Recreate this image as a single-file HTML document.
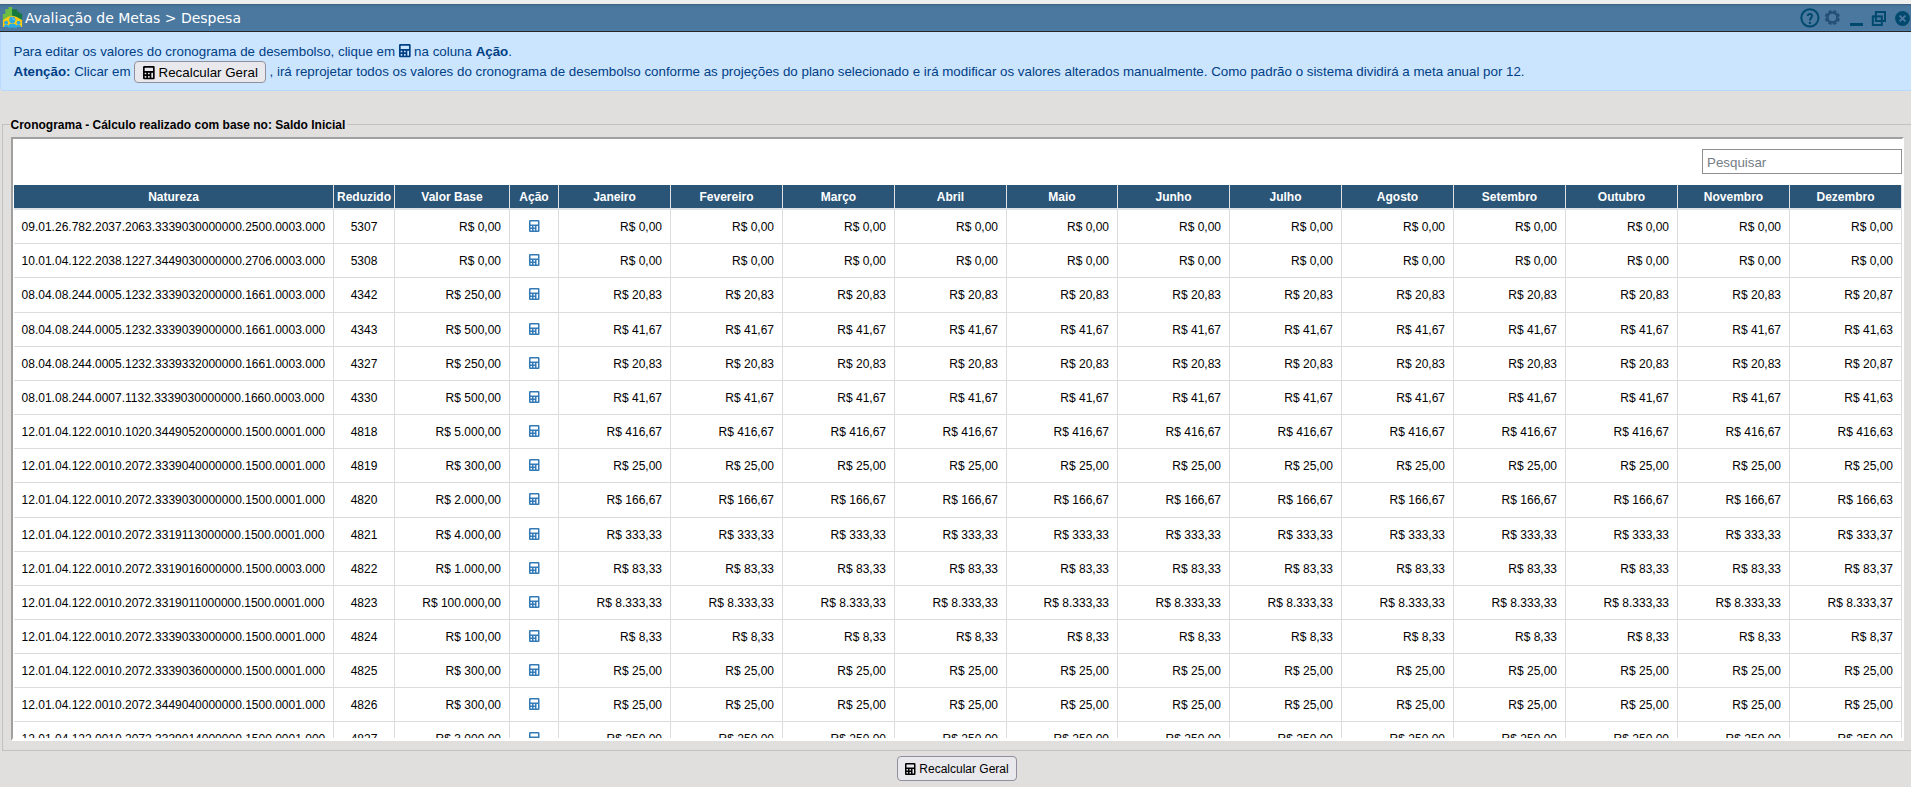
<!DOCTYPE html>
<html lang="pt-BR"><head><meta charset="utf-8"><title>Avaliação de Metas &gt; Despesa</title>
<style>
*{box-sizing:border-box}
html,body{margin:0;padding:0}
html{width:1911px;height:787px;overflow:hidden}
body{width:1911px;height:787px;overflow:hidden;position:relative;background:#e1dfde;font-family:"Liberation Sans",Arial,sans-serif;font-size:12px;color:#000}
#topstrip{position:absolute;left:0;top:0;width:1911px;height:4px;background:#eeeeee}
#titlebar{position:absolute;left:0;top:4px;width:1911px;height:28px;background:linear-gradient(#456f94 0,#4a789f 2px,#4a789f 24px,#4d7eaa 26px);border-top:1px solid #3d6487;border-bottom:1px solid #262626;}
#titlebar .ttl{position:absolute;left:25px;top:4px;font-family:"DejaVu Sans","Liberation Sans",sans-serif;font-size:14px;color:#fff;white-space:nowrap;line-height:18px}
#titlebar svg.logo{position:absolute;left:2px;top:2px}
#titlebar .ico{position:absolute}
#info{position:absolute;left:0;top:32px;width:1911px;height:59px;background:#cce5ff;border:1px solid #b8daff;border-top:none;border-right:none;border-radius:0 0 0 4px;color:#004085;font-size:13.333px;padding:0}
#info .l1{position:absolute;left:12.5px;top:12px;white-space:nowrap;line-height:16px}
#info .l2{position:absolute;left:12.5px;top:28px;white-space:nowrap;line-height:22px}
.btn{display:inline-block;background:#e9e9ed;border:1px solid #8f8f9d;border-radius:4px;color:#000;font-family:"Liberation Sans",Arial,sans-serif;font-size:13.333px;white-space:nowrap}
svg.calc{fill:currentColor;vertical-align:-0.125em;height:1em;width:0.875em;overflow:visible}
#fs{position:absolute;left:2px;top:124px;width:1909px;height:627px;border:1px solid #c4c2c1;border-right:none}
#legend{position:absolute;left:9.5px;top:117px;padding:0 2px 0 1px;background:#e1dfde;font-weight:bold;font-size:12px;line-height:16px;white-space:nowrap}
#box{position:absolute;left:11px;top:137px;width:1893px;height:604px;background:#fff;border:2px solid;border-bottom-width:3px;border-color:#a0a0a0 #fff #fff #a0a0a0;overflow:hidden}
#search{position:absolute;left:1689px;top:10px;width:200px;height:25px;border:1px solid #8f8f93;background:#fff;font-size:13.333px;color:#747c86;padding:5px 0 0 4px;line-height:15px}
table.grid{position:absolute;left:1px;top:46px;border-collapse:collapse;table-layout:fixed;width:1887px;font-size:12px}
table.grid th{background:#2b5577;color:#fff;font-weight:bold;height:24px;padding:0;border:1px solid #dee2e6;border-top:none;border-bottom:2px solid #dee2e6;text-align:center;font-size:12px}
table.grid td{height:34px;padding:2px 8px 0 8px;border:1px solid #dcdcdc;white-space:nowrap;overflow:hidden}
table.grid td.l{text-align:left;padding-left:6.6px}
table.grid td.r{text-align:right}
table.grid td.c{text-align:center;padding:2px 0 0 0}
table.grid tr.t td{height:35px;padding-top:1px}
table.grid th:first-child{border-left-color:#2b5577;padding-right:1px}
table.grid td:first-child{border-left-color:#fff}
a.act{color:#337ab7}
a.act svg{position:relative;top:-0.7px}
#btnbottom{position:absolute;left:897px;top:756px;width:120px;height:25px;padding:5px 0 0 7.5px;line-height:14px;font-size:12px}

#btnbottom svg{margin-left:-0.5px;margin-right:0.5px}

</style></head>
<body>
<div id="topstrip"></div>
<div id="titlebar">
<svg class="logo" width="22" height="22" viewBox="0 0 22 22"><polygon points="0.850,13.200 0.850,7.100 3.300,7.100 3.300,2.300 6.500,2.300 6.500,0 10.100,0 10.100,9.500" fill="#6fbe44"/><polygon points="10.100,9.500 10.100,2.200 15.100,2.200 15.100,4.650 17.400,4.650 17.400,6.400 20.100,6.400 20.100,13.200" fill="#167a3d"/><polygon points="0.850,13 6.300,9.800 10.300,8.800 14.300,9.800 20.100,13 20.100,19.950 0.850,19.950" fill="#fdc911"/><g fill="#29abe2"><circle cx="10.300" cy="12.900" r="3.100"/><path d="M6 20.700c0-2.800 1.600-4.200 4.300-4.200s4.800 1.400 4.800 4.200Z"/><circle cx="4.200" cy="15.700" r="1.900"/><path d="M1.900 20c0-1.700 .8-2.600 2.300-2.600s2.500 .9 2.500 2.600Z"/><circle cx="16.500" cy="15.700" r="1.900"/><path d="M14 20c0-1.700 .9-2.600 2.500-2.600s2.500 .9 2.500 2.600Z"/></g><path d="M9.300 10.500c1.700 .2 3 1.400 3.400 3.200c-1.100-1.300-2.200-2.300-3.400-3.200Z" fill="#a8dcf3"/></svg>
<span class="ttl">Avaliação de Metas &gt; Despesa</span>
<svg class="ico" style="left:1800px;top:3px" width="20" height="20" viewBox="0 0 20 20"><circle cx="9.900" cy="9.850" r="8.600" fill="none" stroke="#00496e" stroke-width="2"/><path d="M7.800 8.100a2.100 2.100 0 0 1 4.200 0c0 1.900-2.100 2-2.100 4.500" fill="none" stroke="#00496e" stroke-width="1.900"/><circle cx="9.900" cy="15" r="1.150" fill="#00496e"/></svg>
<svg class="ico" style="left:1824px;top:4px" width="18" height="18" viewBox="0 0 18 18"><g transform="translate(8.400 8.500)"><g fill="#254f76" transform="rotate(22.5)"><circle r="5.900"/><rect x="-1.650" y="-7.500" width="3.300" height="15" transform="rotate(0)"/><rect x="-1.650" y="-7.500" width="3.300" height="15" transform="rotate(45)"/><rect x="-1.650" y="-7.500" width="3.300" height="15" transform="rotate(90)"/><rect x="-1.650" y="-7.500" width="3.300" height="15" transform="rotate(135)"/></g><circle r="3.750" fill="#4a789f"/></g></svg>
<div class="ico" style="left:1850px;top:18px;width:13px;height:3px;background:#00496e"></div>
<svg class="ico" style="left:1871px;top:6px" width="16" height="16" viewBox="0 0 16 16"><rect x="4.900" y="1" width="9.100" height="9" fill="none" stroke="#00496e" stroke-width="2"/><rect x="1.800" y="5.400" width="9" height="8.600" fill="none" stroke="#00496e" stroke-width="2"/></svg>
<svg class="ico" style="left:1895px;top:6px" width="15" height="15" viewBox="0 0 15 15"><circle cx="7.500" cy="7.500" r="7.400" fill="#00496e"/><path d="M4.600 4.600l5.800 5.800M10.400 4.600l-5.800 5.800" stroke="#4a789f" stroke-width="2"/></svg>
</div>
<div id="info">
<div class="l1">Para editar os valores do cronograma de desembolso, clique em <svg class="calc" viewBox="0 0 448 512"><path fill-rule="evenodd" d="M48 0H400a48 48 0 0 1 48 48V464a48 48 0 0 1 -48 48H48a48 48 0 0 1 -48 -48V48a48 48 0 0 1 48 -48ZM76.8 64H371.2a12.8 12.8 0 0 1 12.8 12.8V179.2a12.8 12.8 0 0 1 -12.8 12.8H76.8a12.8 12.8 0 0 1 -12.8 -12.8V76.8a12.8 12.8 0 0 1 12.8 -12.8ZM76.8 256H115.2a12.8 12.8 0 0 1 12.8 12.8V307.2a12.8 12.8 0 0 1 -12.8 12.8H76.8a12.8 12.8 0 0 1 -12.8 -12.8V268.8a12.8 12.8 0 0 1 12.8 -12.8ZM204.8 256H243.2a12.8 12.8 0 0 1 12.8 12.8V307.2a12.8 12.8 0 0 1 -12.8 12.8H204.8a12.8 12.8 0 0 1 -12.8 -12.8V268.8a12.8 12.8 0 0 1 12.8 -12.8ZM76.8 384H115.2a12.8 12.8 0 0 1 12.8 12.8V435.2a12.8 12.8 0 0 1 -12.8 12.8H76.8a12.8 12.8 0 0 1 -12.8 -12.8V396.8a12.8 12.8 0 0 1 12.8 -12.8ZM204.8 384H243.2a12.8 12.8 0 0 1 12.8 12.8V435.2a12.8 12.8 0 0 1 -12.8 12.8H204.8a12.8 12.8 0 0 1 -12.8 -12.8V396.8a12.8 12.8 0 0 1 12.8 -12.8ZM332.8 256H371.2a12.8 12.8 0 0 1 12.8 12.8V435.2a12.8 12.8 0 0 1 -12.8 12.8H332.8a12.8 12.8 0 0 1 -12.8 -12.8V268.8a12.8 12.8 0 0 1 12.8 -12.8Z"/></svg> na coluna <b>Ação</b>.</div>
<div class="l2"><b>Atenção:</b> Clicar em <span class="btn" style="padding:3px 7px 2px 8px;line-height:15px;position:relative;top:1.400px"><svg class="calc" viewBox="0 0 448 512"><path fill-rule="evenodd" d="M48 0H400a48 48 0 0 1 48 48V464a48 48 0 0 1 -48 48H48a48 48 0 0 1 -48 -48V48a48 48 0 0 1 48 -48ZM76.8 64H371.2a12.8 12.8 0 0 1 12.8 12.8V179.2a12.8 12.8 0 0 1 -12.8 12.8H76.8a12.8 12.8 0 0 1 -12.8 -12.8V76.8a12.8 12.8 0 0 1 12.8 -12.8ZM76.8 256H115.2a12.8 12.8 0 0 1 12.8 12.8V307.2a12.8 12.8 0 0 1 -12.8 12.8H76.8a12.8 12.8 0 0 1 -12.8 -12.8V268.8a12.8 12.8 0 0 1 12.8 -12.8ZM204.8 256H243.2a12.8 12.8 0 0 1 12.8 12.8V307.2a12.8 12.8 0 0 1 -12.8 12.8H204.8a12.8 12.8 0 0 1 -12.8 -12.8V268.8a12.8 12.8 0 0 1 12.8 -12.8ZM76.8 384H115.2a12.8 12.8 0 0 1 12.8 12.8V435.2a12.8 12.8 0 0 1 -12.8 12.8H76.8a12.8 12.8 0 0 1 -12.8 -12.8V396.8a12.8 12.8 0 0 1 12.8 -12.8ZM204.8 384H243.2a12.8 12.8 0 0 1 12.8 12.8V435.2a12.8 12.8 0 0 1 -12.8 12.8H204.8a12.8 12.8 0 0 1 -12.8 -12.8V396.8a12.8 12.8 0 0 1 12.8 -12.8ZM332.8 256H371.2a12.8 12.8 0 0 1 12.8 12.8V435.2a12.8 12.8 0 0 1 -12.8 12.8H332.8a12.8 12.8 0 0 1 -12.8 -12.8V268.8a12.8 12.8 0 0 1 12.8 -12.8Z"/></svg> Recalcular Geral</span> , irá reprojetar todos os valores do cronograma de desembolso conforme as projeções do plano selecionado e irá modificar os valores alterados manualmente. Como padrão o sistema dividirá a meta anual por 12.</div>
</div>
<div id="fs"></div>
<div id="legend">Cronograma - Cálculo realizado com base no: Saldo Inicial</div>
<div id="box">
<div id="search">Pesquisar</div>
<table class="grid"><colgroup><col style="width:319px"><col style="width:61px"><col style="width:115px"><col style="width:49px"><col style="width:112px"><col style="width:112px"><col style="width:112px"><col style="width:112px"><col style="width:111px"><col style="width:112px"><col style="width:112px"><col style="width:112px"><col style="width:112px"><col style="width:112px"><col style="width:112px"><col style="width:112px"></colgroup>
<thead><tr><th>Natureza</th><th>Reduzido</th><th>Valor Base</th><th>Ação</th><th>Janeiro</th><th>Fevereiro</th><th>Março</th><th>Abril</th><th>Maio</th><th>Junho</th><th>Julho</th><th>Agosto</th><th>Setembro</th><th>Outubro</th><th>Novembro</th><th>Dezembro</th></tr></thead>
<tbody>
<tr><td class="l">09.01.26.782.2037.2063.3339030000000.2500.0003.000</td><td class="c">5307</td><td class="r">R$ 0,00</td><td class="c"><a class="act"><svg class="calc" viewBox="0 0 448 512"><path fill-rule="evenodd" d="M48 0H400a48 48 0 0 1 48 48V464a48 48 0 0 1 -48 48H48a48 48 0 0 1 -48 -48V48a48 48 0 0 1 48 -48ZM76.8 64H371.2a12.8 12.8 0 0 1 12.8 12.8V179.2a12.8 12.8 0 0 1 -12.8 12.8H76.8a12.8 12.8 0 0 1 -12.8 -12.8V76.8a12.8 12.8 0 0 1 12.8 -12.8ZM76.8 256H115.2a12.8 12.8 0 0 1 12.8 12.8V307.2a12.8 12.8 0 0 1 -12.8 12.8H76.8a12.8 12.8 0 0 1 -12.8 -12.8V268.8a12.8 12.8 0 0 1 12.8 -12.8ZM204.8 256H243.2a12.8 12.8 0 0 1 12.8 12.8V307.2a12.8 12.8 0 0 1 -12.8 12.8H204.8a12.8 12.8 0 0 1 -12.8 -12.8V268.8a12.8 12.8 0 0 1 12.8 -12.8ZM76.8 384H115.2a12.8 12.8 0 0 1 12.8 12.8V435.2a12.8 12.8 0 0 1 -12.8 12.8H76.8a12.8 12.8 0 0 1 -12.8 -12.8V396.8a12.8 12.8 0 0 1 12.8 -12.8ZM204.8 384H243.2a12.8 12.8 0 0 1 12.8 12.8V435.2a12.8 12.8 0 0 1 -12.8 12.8H204.8a12.8 12.8 0 0 1 -12.8 -12.8V396.8a12.8 12.8 0 0 1 12.8 -12.8ZM332.8 256H371.2a12.8 12.8 0 0 1 12.8 12.8V435.2a12.8 12.8 0 0 1 -12.8 12.8H332.8a12.8 12.8 0 0 1 -12.8 -12.8V268.8a12.8 12.8 0 0 1 12.8 -12.8Z"/></svg></a></td><td class="r">R$ 0,00</td><td class="r">R$ 0,00</td><td class="r">R$ 0,00</td><td class="r">R$ 0,00</td><td class="r">R$ 0,00</td><td class="r">R$ 0,00</td><td class="r">R$ 0,00</td><td class="r">R$ 0,00</td><td class="r">R$ 0,00</td><td class="r">R$ 0,00</td><td class="r">R$ 0,00</td><td class="r">R$ 0,00</td></tr>
<tr><td class="l">10.01.04.122.2038.1227.3449030000000.2706.0003.000</td><td class="c">5308</td><td class="r">R$ 0,00</td><td class="c"><a class="act"><svg class="calc" viewBox="0 0 448 512"><path fill-rule="evenodd" d="M48 0H400a48 48 0 0 1 48 48V464a48 48 0 0 1 -48 48H48a48 48 0 0 1 -48 -48V48a48 48 0 0 1 48 -48ZM76.8 64H371.2a12.8 12.8 0 0 1 12.8 12.8V179.2a12.8 12.8 0 0 1 -12.8 12.8H76.8a12.8 12.8 0 0 1 -12.8 -12.8V76.8a12.8 12.8 0 0 1 12.8 -12.8ZM76.8 256H115.2a12.8 12.8 0 0 1 12.8 12.8V307.2a12.8 12.8 0 0 1 -12.8 12.8H76.8a12.8 12.8 0 0 1 -12.8 -12.8V268.8a12.8 12.8 0 0 1 12.8 -12.8ZM204.8 256H243.2a12.8 12.8 0 0 1 12.8 12.8V307.2a12.8 12.8 0 0 1 -12.8 12.8H204.8a12.8 12.8 0 0 1 -12.8 -12.8V268.8a12.8 12.8 0 0 1 12.8 -12.8ZM76.8 384H115.2a12.8 12.8 0 0 1 12.8 12.8V435.2a12.8 12.8 0 0 1 -12.8 12.8H76.8a12.8 12.8 0 0 1 -12.8 -12.8V396.8a12.8 12.8 0 0 1 12.8 -12.8ZM204.8 384H243.2a12.8 12.8 0 0 1 12.8 12.8V435.2a12.8 12.8 0 0 1 -12.8 12.8H204.8a12.8 12.8 0 0 1 -12.8 -12.8V396.8a12.8 12.8 0 0 1 12.8 -12.8ZM332.8 256H371.2a12.8 12.8 0 0 1 12.8 12.8V435.2a12.8 12.8 0 0 1 -12.8 12.8H332.8a12.8 12.8 0 0 1 -12.8 -12.8V268.8a12.8 12.8 0 0 1 12.8 -12.8Z"/></svg></a></td><td class="r">R$ 0,00</td><td class="r">R$ 0,00</td><td class="r">R$ 0,00</td><td class="r">R$ 0,00</td><td class="r">R$ 0,00</td><td class="r">R$ 0,00</td><td class="r">R$ 0,00</td><td class="r">R$ 0,00</td><td class="r">R$ 0,00</td><td class="r">R$ 0,00</td><td class="r">R$ 0,00</td><td class="r">R$ 0,00</td></tr>
<tr class="t"><td class="l">08.04.08.244.0005.1232.3339032000000.1661.0003.000</td><td class="c">4342</td><td class="r">R$ 250,00</td><td class="c"><a class="act"><svg class="calc" viewBox="0 0 448 512"><path fill-rule="evenodd" d="M48 0H400a48 48 0 0 1 48 48V464a48 48 0 0 1 -48 48H48a48 48 0 0 1 -48 -48V48a48 48 0 0 1 48 -48ZM76.8 64H371.2a12.8 12.8 0 0 1 12.8 12.8V179.2a12.8 12.8 0 0 1 -12.8 12.8H76.8a12.8 12.8 0 0 1 -12.8 -12.8V76.8a12.8 12.8 0 0 1 12.8 -12.8ZM76.8 256H115.2a12.8 12.8 0 0 1 12.8 12.8V307.2a12.8 12.8 0 0 1 -12.8 12.8H76.8a12.8 12.8 0 0 1 -12.8 -12.8V268.8a12.8 12.8 0 0 1 12.8 -12.8ZM204.8 256H243.2a12.8 12.8 0 0 1 12.8 12.8V307.2a12.8 12.8 0 0 1 -12.8 12.8H204.8a12.8 12.8 0 0 1 -12.8 -12.8V268.8a12.8 12.8 0 0 1 12.8 -12.8ZM76.8 384H115.2a12.8 12.8 0 0 1 12.8 12.8V435.2a12.8 12.8 0 0 1 -12.8 12.8H76.8a12.8 12.8 0 0 1 -12.8 -12.8V396.8a12.8 12.8 0 0 1 12.8 -12.8ZM204.8 384H243.2a12.8 12.8 0 0 1 12.8 12.8V435.2a12.8 12.8 0 0 1 -12.8 12.8H204.8a12.8 12.8 0 0 1 -12.8 -12.8V396.8a12.8 12.8 0 0 1 12.8 -12.8ZM332.8 256H371.2a12.8 12.8 0 0 1 12.8 12.8V435.2a12.8 12.8 0 0 1 -12.8 12.8H332.8a12.8 12.8 0 0 1 -12.8 -12.8V268.8a12.8 12.8 0 0 1 12.8 -12.8Z"/></svg></a></td><td class="r">R$ 20,83</td><td class="r">R$ 20,83</td><td class="r">R$ 20,83</td><td class="r">R$ 20,83</td><td class="r">R$ 20,83</td><td class="r">R$ 20,83</td><td class="r">R$ 20,83</td><td class="r">R$ 20,83</td><td class="r">R$ 20,83</td><td class="r">R$ 20,83</td><td class="r">R$ 20,83</td><td class="r">R$ 20,87</td></tr>
<tr><td class="l">08.04.08.244.0005.1232.3339039000000.1661.0003.000</td><td class="c">4343</td><td class="r">R$ 500,00</td><td class="c"><a class="act"><svg class="calc" viewBox="0 0 448 512"><path fill-rule="evenodd" d="M48 0H400a48 48 0 0 1 48 48V464a48 48 0 0 1 -48 48H48a48 48 0 0 1 -48 -48V48a48 48 0 0 1 48 -48ZM76.8 64H371.2a12.8 12.8 0 0 1 12.8 12.8V179.2a12.8 12.8 0 0 1 -12.8 12.8H76.8a12.8 12.8 0 0 1 -12.8 -12.8V76.8a12.8 12.8 0 0 1 12.8 -12.8ZM76.8 256H115.2a12.8 12.8 0 0 1 12.8 12.8V307.2a12.8 12.8 0 0 1 -12.8 12.8H76.8a12.8 12.8 0 0 1 -12.8 -12.8V268.8a12.8 12.8 0 0 1 12.8 -12.8ZM204.8 256H243.2a12.8 12.8 0 0 1 12.8 12.8V307.2a12.8 12.8 0 0 1 -12.8 12.8H204.8a12.8 12.8 0 0 1 -12.8 -12.8V268.8a12.8 12.8 0 0 1 12.8 -12.8ZM76.8 384H115.2a12.8 12.8 0 0 1 12.8 12.8V435.2a12.8 12.8 0 0 1 -12.8 12.8H76.8a12.8 12.8 0 0 1 -12.8 -12.8V396.8a12.8 12.8 0 0 1 12.8 -12.8ZM204.8 384H243.2a12.8 12.8 0 0 1 12.8 12.8V435.2a12.8 12.8 0 0 1 -12.8 12.8H204.8a12.8 12.8 0 0 1 -12.8 -12.8V396.8a12.8 12.8 0 0 1 12.8 -12.8ZM332.8 256H371.2a12.8 12.8 0 0 1 12.8 12.8V435.2a12.8 12.8 0 0 1 -12.8 12.8H332.8a12.8 12.8 0 0 1 -12.8 -12.8V268.8a12.8 12.8 0 0 1 12.8 -12.8Z"/></svg></a></td><td class="r">R$ 41,67</td><td class="r">R$ 41,67</td><td class="r">R$ 41,67</td><td class="r">R$ 41,67</td><td class="r">R$ 41,67</td><td class="r">R$ 41,67</td><td class="r">R$ 41,67</td><td class="r">R$ 41,67</td><td class="r">R$ 41,67</td><td class="r">R$ 41,67</td><td class="r">R$ 41,67</td><td class="r">R$ 41,63</td></tr>
<tr><td class="l">08.04.08.244.0005.1232.3339332000000.1661.0003.000</td><td class="c">4327</td><td class="r">R$ 250,00</td><td class="c"><a class="act"><svg class="calc" viewBox="0 0 448 512"><path fill-rule="evenodd" d="M48 0H400a48 48 0 0 1 48 48V464a48 48 0 0 1 -48 48H48a48 48 0 0 1 -48 -48V48a48 48 0 0 1 48 -48ZM76.8 64H371.2a12.8 12.8 0 0 1 12.8 12.8V179.2a12.8 12.8 0 0 1 -12.8 12.8H76.8a12.8 12.8 0 0 1 -12.8 -12.8V76.8a12.8 12.8 0 0 1 12.8 -12.8ZM76.8 256H115.2a12.8 12.8 0 0 1 12.8 12.8V307.2a12.8 12.8 0 0 1 -12.8 12.8H76.8a12.8 12.8 0 0 1 -12.8 -12.8V268.8a12.8 12.8 0 0 1 12.8 -12.8ZM204.8 256H243.2a12.8 12.8 0 0 1 12.8 12.8V307.2a12.8 12.8 0 0 1 -12.8 12.8H204.8a12.8 12.8 0 0 1 -12.8 -12.8V268.8a12.8 12.8 0 0 1 12.8 -12.8ZM76.8 384H115.2a12.8 12.8 0 0 1 12.8 12.8V435.2a12.8 12.8 0 0 1 -12.8 12.8H76.8a12.8 12.8 0 0 1 -12.8 -12.8V396.8a12.8 12.8 0 0 1 12.8 -12.8ZM204.8 384H243.2a12.8 12.8 0 0 1 12.8 12.8V435.2a12.8 12.8 0 0 1 -12.8 12.8H204.8a12.8 12.8 0 0 1 -12.8 -12.8V396.8a12.8 12.8 0 0 1 12.8 -12.8ZM332.8 256H371.2a12.8 12.8 0 0 1 12.8 12.8V435.2a12.8 12.8 0 0 1 -12.8 12.8H332.8a12.8 12.8 0 0 1 -12.8 -12.8V268.8a12.8 12.8 0 0 1 12.8 -12.8Z"/></svg></a></td><td class="r">R$ 20,83</td><td class="r">R$ 20,83</td><td class="r">R$ 20,83</td><td class="r">R$ 20,83</td><td class="r">R$ 20,83</td><td class="r">R$ 20,83</td><td class="r">R$ 20,83</td><td class="r">R$ 20,83</td><td class="r">R$ 20,83</td><td class="r">R$ 20,83</td><td class="r">R$ 20,83</td><td class="r">R$ 20,87</td></tr>
<tr><td class="l">08.01.08.244.0007.1132.3339030000000.1660.0003.000</td><td class="c">4330</td><td class="r">R$ 500,00</td><td class="c"><a class="act"><svg class="calc" viewBox="0 0 448 512"><path fill-rule="evenodd" d="M48 0H400a48 48 0 0 1 48 48V464a48 48 0 0 1 -48 48H48a48 48 0 0 1 -48 -48V48a48 48 0 0 1 48 -48ZM76.8 64H371.2a12.8 12.8 0 0 1 12.8 12.8V179.2a12.8 12.8 0 0 1 -12.8 12.8H76.8a12.8 12.8 0 0 1 -12.8 -12.8V76.8a12.8 12.8 0 0 1 12.8 -12.8ZM76.8 256H115.2a12.8 12.8 0 0 1 12.8 12.8V307.2a12.8 12.8 0 0 1 -12.8 12.8H76.8a12.8 12.8 0 0 1 -12.8 -12.8V268.8a12.8 12.8 0 0 1 12.8 -12.8ZM204.8 256H243.2a12.8 12.8 0 0 1 12.8 12.8V307.2a12.8 12.8 0 0 1 -12.8 12.8H204.8a12.8 12.8 0 0 1 -12.8 -12.8V268.8a12.8 12.8 0 0 1 12.8 -12.8ZM76.8 384H115.2a12.8 12.8 0 0 1 12.8 12.8V435.2a12.8 12.8 0 0 1 -12.8 12.8H76.8a12.8 12.8 0 0 1 -12.8 -12.8V396.8a12.8 12.8 0 0 1 12.8 -12.8ZM204.8 384H243.2a12.8 12.8 0 0 1 12.8 12.8V435.2a12.8 12.8 0 0 1 -12.8 12.8H204.8a12.8 12.8 0 0 1 -12.8 -12.8V396.8a12.8 12.8 0 0 1 12.8 -12.8ZM332.8 256H371.2a12.8 12.8 0 0 1 12.8 12.8V435.2a12.8 12.8 0 0 1 -12.8 12.8H332.8a12.8 12.8 0 0 1 -12.8 -12.8V268.8a12.8 12.8 0 0 1 12.8 -12.8Z"/></svg></a></td><td class="r">R$ 41,67</td><td class="r">R$ 41,67</td><td class="r">R$ 41,67</td><td class="r">R$ 41,67</td><td class="r">R$ 41,67</td><td class="r">R$ 41,67</td><td class="r">R$ 41,67</td><td class="r">R$ 41,67</td><td class="r">R$ 41,67</td><td class="r">R$ 41,67</td><td class="r">R$ 41,67</td><td class="r">R$ 41,63</td></tr>
<tr><td class="l">12.01.04.122.0010.1020.3449052000000.1500.0001.000</td><td class="c">4818</td><td class="r">R$ 5.000,00</td><td class="c"><a class="act"><svg class="calc" viewBox="0 0 448 512"><path fill-rule="evenodd" d="M48 0H400a48 48 0 0 1 48 48V464a48 48 0 0 1 -48 48H48a48 48 0 0 1 -48 -48V48a48 48 0 0 1 48 -48ZM76.8 64H371.2a12.8 12.8 0 0 1 12.8 12.8V179.2a12.8 12.8 0 0 1 -12.8 12.8H76.8a12.8 12.8 0 0 1 -12.8 -12.8V76.8a12.8 12.8 0 0 1 12.8 -12.8ZM76.8 256H115.2a12.8 12.8 0 0 1 12.8 12.8V307.2a12.8 12.8 0 0 1 -12.8 12.8H76.8a12.8 12.8 0 0 1 -12.8 -12.8V268.8a12.8 12.8 0 0 1 12.8 -12.8ZM204.8 256H243.2a12.8 12.8 0 0 1 12.8 12.8V307.2a12.8 12.8 0 0 1 -12.8 12.8H204.8a12.8 12.8 0 0 1 -12.8 -12.8V268.8a12.8 12.8 0 0 1 12.8 -12.8ZM76.8 384H115.2a12.8 12.8 0 0 1 12.8 12.8V435.2a12.8 12.8 0 0 1 -12.8 12.8H76.8a12.8 12.8 0 0 1 -12.8 -12.8V396.8a12.8 12.8 0 0 1 12.8 -12.8ZM204.8 384H243.2a12.8 12.8 0 0 1 12.8 12.8V435.2a12.8 12.8 0 0 1 -12.8 12.8H204.8a12.8 12.8 0 0 1 -12.8 -12.8V396.8a12.8 12.8 0 0 1 12.8 -12.8ZM332.8 256H371.2a12.8 12.8 0 0 1 12.8 12.8V435.2a12.8 12.8 0 0 1 -12.8 12.8H332.8a12.8 12.8 0 0 1 -12.8 -12.8V268.8a12.8 12.8 0 0 1 12.8 -12.8Z"/></svg></a></td><td class="r">R$ 416,67</td><td class="r">R$ 416,67</td><td class="r">R$ 416,67</td><td class="r">R$ 416,67</td><td class="r">R$ 416,67</td><td class="r">R$ 416,67</td><td class="r">R$ 416,67</td><td class="r">R$ 416,67</td><td class="r">R$ 416,67</td><td class="r">R$ 416,67</td><td class="r">R$ 416,67</td><td class="r">R$ 416,63</td></tr>
<tr><td class="l">12.01.04.122.0010.2072.3339040000000.1500.0001.000</td><td class="c">4819</td><td class="r">R$ 300,00</td><td class="c"><a class="act"><svg class="calc" viewBox="0 0 448 512"><path fill-rule="evenodd" d="M48 0H400a48 48 0 0 1 48 48V464a48 48 0 0 1 -48 48H48a48 48 0 0 1 -48 -48V48a48 48 0 0 1 48 -48ZM76.8 64H371.2a12.8 12.8 0 0 1 12.8 12.8V179.2a12.8 12.8 0 0 1 -12.8 12.8H76.8a12.8 12.8 0 0 1 -12.8 -12.8V76.8a12.8 12.8 0 0 1 12.8 -12.8ZM76.8 256H115.2a12.8 12.8 0 0 1 12.8 12.8V307.2a12.8 12.8 0 0 1 -12.8 12.8H76.8a12.8 12.8 0 0 1 -12.8 -12.8V268.8a12.8 12.8 0 0 1 12.8 -12.8ZM204.8 256H243.2a12.8 12.8 0 0 1 12.8 12.8V307.2a12.8 12.8 0 0 1 -12.8 12.8H204.8a12.8 12.8 0 0 1 -12.8 -12.8V268.8a12.8 12.8 0 0 1 12.8 -12.8ZM76.8 384H115.2a12.8 12.8 0 0 1 12.8 12.8V435.2a12.8 12.8 0 0 1 -12.8 12.8H76.8a12.8 12.8 0 0 1 -12.8 -12.8V396.8a12.8 12.8 0 0 1 12.8 -12.8ZM204.8 384H243.2a12.8 12.8 0 0 1 12.8 12.8V435.2a12.8 12.8 0 0 1 -12.8 12.8H204.8a12.8 12.8 0 0 1 -12.8 -12.8V396.8a12.8 12.8 0 0 1 12.8 -12.8ZM332.8 256H371.2a12.8 12.8 0 0 1 12.8 12.8V435.2a12.8 12.8 0 0 1 -12.8 12.8H332.8a12.8 12.8 0 0 1 -12.8 -12.8V268.8a12.8 12.8 0 0 1 12.8 -12.8Z"/></svg></a></td><td class="r">R$ 25,00</td><td class="r">R$ 25,00</td><td class="r">R$ 25,00</td><td class="r">R$ 25,00</td><td class="r">R$ 25,00</td><td class="r">R$ 25,00</td><td class="r">R$ 25,00</td><td class="r">R$ 25,00</td><td class="r">R$ 25,00</td><td class="r">R$ 25,00</td><td class="r">R$ 25,00</td><td class="r">R$ 25,00</td></tr>
<tr class="t"><td class="l">12.01.04.122.0010.2072.3339030000000.1500.0001.000</td><td class="c">4820</td><td class="r">R$ 2.000,00</td><td class="c"><a class="act"><svg class="calc" viewBox="0 0 448 512"><path fill-rule="evenodd" d="M48 0H400a48 48 0 0 1 48 48V464a48 48 0 0 1 -48 48H48a48 48 0 0 1 -48 -48V48a48 48 0 0 1 48 -48ZM76.8 64H371.2a12.8 12.8 0 0 1 12.8 12.8V179.2a12.8 12.8 0 0 1 -12.8 12.8H76.8a12.8 12.8 0 0 1 -12.8 -12.8V76.8a12.8 12.8 0 0 1 12.8 -12.8ZM76.8 256H115.2a12.8 12.8 0 0 1 12.8 12.8V307.2a12.8 12.8 0 0 1 -12.8 12.8H76.8a12.8 12.8 0 0 1 -12.8 -12.8V268.8a12.8 12.8 0 0 1 12.8 -12.8ZM204.8 256H243.2a12.8 12.8 0 0 1 12.8 12.8V307.2a12.8 12.8 0 0 1 -12.8 12.8H204.8a12.8 12.8 0 0 1 -12.8 -12.8V268.8a12.8 12.8 0 0 1 12.8 -12.8ZM76.8 384H115.2a12.8 12.8 0 0 1 12.8 12.8V435.2a12.8 12.8 0 0 1 -12.8 12.8H76.8a12.8 12.8 0 0 1 -12.8 -12.8V396.8a12.8 12.8 0 0 1 12.8 -12.8ZM204.8 384H243.2a12.8 12.8 0 0 1 12.8 12.8V435.2a12.8 12.8 0 0 1 -12.8 12.8H204.8a12.8 12.8 0 0 1 -12.8 -12.8V396.8a12.8 12.8 0 0 1 12.8 -12.8ZM332.8 256H371.2a12.8 12.8 0 0 1 12.8 12.8V435.2a12.8 12.8 0 0 1 -12.8 12.8H332.8a12.8 12.8 0 0 1 -12.8 -12.8V268.8a12.8 12.8 0 0 1 12.8 -12.8Z"/></svg></a></td><td class="r">R$ 166,67</td><td class="r">R$ 166,67</td><td class="r">R$ 166,67</td><td class="r">R$ 166,67</td><td class="r">R$ 166,67</td><td class="r">R$ 166,67</td><td class="r">R$ 166,67</td><td class="r">R$ 166,67</td><td class="r">R$ 166,67</td><td class="r">R$ 166,67</td><td class="r">R$ 166,67</td><td class="r">R$ 166,63</td></tr>
<tr><td class="l">12.01.04.122.0010.2072.3319113000000.1500.0001.000</td><td class="c">4821</td><td class="r">R$ 4.000,00</td><td class="c"><a class="act"><svg class="calc" viewBox="0 0 448 512"><path fill-rule="evenodd" d="M48 0H400a48 48 0 0 1 48 48V464a48 48 0 0 1 -48 48H48a48 48 0 0 1 -48 -48V48a48 48 0 0 1 48 -48ZM76.8 64H371.2a12.8 12.8 0 0 1 12.8 12.8V179.2a12.8 12.8 0 0 1 -12.8 12.8H76.8a12.8 12.8 0 0 1 -12.8 -12.8V76.8a12.8 12.8 0 0 1 12.8 -12.8ZM76.8 256H115.2a12.8 12.8 0 0 1 12.8 12.8V307.2a12.8 12.8 0 0 1 -12.8 12.8H76.8a12.8 12.8 0 0 1 -12.8 -12.8V268.8a12.8 12.8 0 0 1 12.8 -12.8ZM204.8 256H243.2a12.8 12.8 0 0 1 12.8 12.8V307.2a12.8 12.8 0 0 1 -12.8 12.8H204.8a12.8 12.8 0 0 1 -12.8 -12.8V268.8a12.8 12.8 0 0 1 12.8 -12.8ZM76.8 384H115.2a12.8 12.8 0 0 1 12.8 12.8V435.2a12.8 12.8 0 0 1 -12.8 12.8H76.8a12.8 12.8 0 0 1 -12.8 -12.8V396.8a12.8 12.8 0 0 1 12.8 -12.8ZM204.8 384H243.2a12.8 12.8 0 0 1 12.8 12.8V435.2a12.8 12.8 0 0 1 -12.8 12.8H204.8a12.8 12.8 0 0 1 -12.8 -12.8V396.8a12.8 12.8 0 0 1 12.8 -12.8ZM332.8 256H371.2a12.8 12.8 0 0 1 12.8 12.8V435.2a12.8 12.8 0 0 1 -12.8 12.8H332.8a12.8 12.8 0 0 1 -12.8 -12.8V268.8a12.8 12.8 0 0 1 12.8 -12.8Z"/></svg></a></td><td class="r">R$ 333,33</td><td class="r">R$ 333,33</td><td class="r">R$ 333,33</td><td class="r">R$ 333,33</td><td class="r">R$ 333,33</td><td class="r">R$ 333,33</td><td class="r">R$ 333,33</td><td class="r">R$ 333,33</td><td class="r">R$ 333,33</td><td class="r">R$ 333,33</td><td class="r">R$ 333,33</td><td class="r">R$ 333,37</td></tr>
<tr><td class="l">12.01.04.122.0010.2072.3319016000000.1500.0003.000</td><td class="c">4822</td><td class="r">R$ 1.000,00</td><td class="c"><a class="act"><svg class="calc" viewBox="0 0 448 512"><path fill-rule="evenodd" d="M48 0H400a48 48 0 0 1 48 48V464a48 48 0 0 1 -48 48H48a48 48 0 0 1 -48 -48V48a48 48 0 0 1 48 -48ZM76.8 64H371.2a12.8 12.8 0 0 1 12.8 12.8V179.2a12.8 12.8 0 0 1 -12.8 12.8H76.8a12.8 12.8 0 0 1 -12.8 -12.8V76.8a12.8 12.8 0 0 1 12.8 -12.8ZM76.8 256H115.2a12.8 12.8 0 0 1 12.8 12.8V307.2a12.8 12.8 0 0 1 -12.8 12.8H76.8a12.8 12.8 0 0 1 -12.8 -12.8V268.8a12.8 12.8 0 0 1 12.8 -12.8ZM204.8 256H243.2a12.8 12.8 0 0 1 12.8 12.8V307.2a12.8 12.8 0 0 1 -12.8 12.8H204.8a12.8 12.8 0 0 1 -12.8 -12.8V268.8a12.8 12.8 0 0 1 12.8 -12.8ZM76.8 384H115.2a12.8 12.8 0 0 1 12.8 12.8V435.2a12.8 12.8 0 0 1 -12.8 12.8H76.8a12.8 12.8 0 0 1 -12.8 -12.8V396.8a12.8 12.8 0 0 1 12.8 -12.8ZM204.8 384H243.2a12.8 12.8 0 0 1 12.8 12.8V435.2a12.8 12.8 0 0 1 -12.8 12.8H204.8a12.8 12.8 0 0 1 -12.8 -12.8V396.8a12.8 12.8 0 0 1 12.8 -12.8ZM332.8 256H371.2a12.8 12.8 0 0 1 12.8 12.8V435.2a12.8 12.8 0 0 1 -12.8 12.8H332.8a12.8 12.8 0 0 1 -12.8 -12.8V268.8a12.8 12.8 0 0 1 12.8 -12.8Z"/></svg></a></td><td class="r">R$ 83,33</td><td class="r">R$ 83,33</td><td class="r">R$ 83,33</td><td class="r">R$ 83,33</td><td class="r">R$ 83,33</td><td class="r">R$ 83,33</td><td class="r">R$ 83,33</td><td class="r">R$ 83,33</td><td class="r">R$ 83,33</td><td class="r">R$ 83,33</td><td class="r">R$ 83,33</td><td class="r">R$ 83,37</td></tr>
<tr><td class="l">12.01.04.122.0010.2072.3319011000000.1500.0001.000</td><td class="c">4823</td><td class="r">R$ 100.000,00</td><td class="c"><a class="act"><svg class="calc" viewBox="0 0 448 512"><path fill-rule="evenodd" d="M48 0H400a48 48 0 0 1 48 48V464a48 48 0 0 1 -48 48H48a48 48 0 0 1 -48 -48V48a48 48 0 0 1 48 -48ZM76.8 64H371.2a12.8 12.8 0 0 1 12.8 12.8V179.2a12.8 12.8 0 0 1 -12.8 12.8H76.8a12.8 12.8 0 0 1 -12.8 -12.8V76.8a12.8 12.8 0 0 1 12.8 -12.8ZM76.8 256H115.2a12.8 12.8 0 0 1 12.8 12.8V307.2a12.8 12.8 0 0 1 -12.8 12.8H76.8a12.8 12.8 0 0 1 -12.8 -12.8V268.8a12.8 12.8 0 0 1 12.8 -12.8ZM204.8 256H243.2a12.8 12.8 0 0 1 12.8 12.8V307.2a12.8 12.8 0 0 1 -12.8 12.8H204.8a12.8 12.8 0 0 1 -12.8 -12.8V268.8a12.8 12.8 0 0 1 12.8 -12.8ZM76.8 384H115.2a12.8 12.8 0 0 1 12.8 12.8V435.2a12.8 12.8 0 0 1 -12.8 12.8H76.8a12.8 12.8 0 0 1 -12.8 -12.8V396.8a12.8 12.8 0 0 1 12.8 -12.8ZM204.8 384H243.2a12.8 12.8 0 0 1 12.8 12.8V435.2a12.8 12.8 0 0 1 -12.8 12.8H204.8a12.8 12.8 0 0 1 -12.8 -12.8V396.8a12.8 12.8 0 0 1 12.8 -12.8ZM332.8 256H371.2a12.8 12.8 0 0 1 12.8 12.8V435.2a12.8 12.8 0 0 1 -12.8 12.8H332.8a12.8 12.8 0 0 1 -12.8 -12.8V268.8a12.8 12.8 0 0 1 12.8 -12.8Z"/></svg></a></td><td class="r">R$ 8.333,33</td><td class="r">R$ 8.333,33</td><td class="r">R$ 8.333,33</td><td class="r">R$ 8.333,33</td><td class="r">R$ 8.333,33</td><td class="r">R$ 8.333,33</td><td class="r">R$ 8.333,33</td><td class="r">R$ 8.333,33</td><td class="r">R$ 8.333,33</td><td class="r">R$ 8.333,33</td><td class="r">R$ 8.333,33</td><td class="r">R$ 8.333,37</td></tr>
<tr><td class="l">12.01.04.122.0010.2072.3339033000000.1500.0001.000</td><td class="c">4824</td><td class="r">R$ 100,00</td><td class="c"><a class="act"><svg class="calc" viewBox="0 0 448 512"><path fill-rule="evenodd" d="M48 0H400a48 48 0 0 1 48 48V464a48 48 0 0 1 -48 48H48a48 48 0 0 1 -48 -48V48a48 48 0 0 1 48 -48ZM76.8 64H371.2a12.8 12.8 0 0 1 12.8 12.8V179.2a12.8 12.8 0 0 1 -12.8 12.8H76.8a12.8 12.8 0 0 1 -12.8 -12.8V76.8a12.8 12.8 0 0 1 12.8 -12.8ZM76.8 256H115.2a12.8 12.8 0 0 1 12.8 12.8V307.2a12.8 12.8 0 0 1 -12.8 12.8H76.8a12.8 12.8 0 0 1 -12.8 -12.8V268.8a12.8 12.8 0 0 1 12.8 -12.8ZM204.8 256H243.2a12.8 12.8 0 0 1 12.8 12.8V307.2a12.8 12.8 0 0 1 -12.8 12.8H204.8a12.8 12.8 0 0 1 -12.8 -12.8V268.8a12.8 12.8 0 0 1 12.8 -12.8ZM76.8 384H115.2a12.8 12.8 0 0 1 12.8 12.8V435.2a12.8 12.8 0 0 1 -12.8 12.8H76.8a12.8 12.8 0 0 1 -12.8 -12.8V396.8a12.8 12.8 0 0 1 12.8 -12.8ZM204.8 384H243.2a12.8 12.8 0 0 1 12.8 12.8V435.2a12.8 12.8 0 0 1 -12.8 12.8H204.8a12.8 12.8 0 0 1 -12.8 -12.8V396.8a12.8 12.8 0 0 1 12.8 -12.8ZM332.8 256H371.2a12.8 12.8 0 0 1 12.8 12.8V435.2a12.8 12.8 0 0 1 -12.8 12.8H332.8a12.8 12.8 0 0 1 -12.8 -12.8V268.8a12.8 12.8 0 0 1 12.8 -12.8Z"/></svg></a></td><td class="r">R$ 8,33</td><td class="r">R$ 8,33</td><td class="r">R$ 8,33</td><td class="r">R$ 8,33</td><td class="r">R$ 8,33</td><td class="r">R$ 8,33</td><td class="r">R$ 8,33</td><td class="r">R$ 8,33</td><td class="r">R$ 8,33</td><td class="r">R$ 8,33</td><td class="r">R$ 8,33</td><td class="r">R$ 8,37</td></tr>
<tr><td class="l">12.01.04.122.0010.2072.3339036000000.1500.0001.000</td><td class="c">4825</td><td class="r">R$ 300,00</td><td class="c"><a class="act"><svg class="calc" viewBox="0 0 448 512"><path fill-rule="evenodd" d="M48 0H400a48 48 0 0 1 48 48V464a48 48 0 0 1 -48 48H48a48 48 0 0 1 -48 -48V48a48 48 0 0 1 48 -48ZM76.8 64H371.2a12.8 12.8 0 0 1 12.8 12.8V179.2a12.8 12.8 0 0 1 -12.8 12.8H76.8a12.8 12.8 0 0 1 -12.8 -12.8V76.8a12.8 12.8 0 0 1 12.8 -12.8ZM76.8 256H115.2a12.8 12.8 0 0 1 12.8 12.8V307.2a12.8 12.8 0 0 1 -12.8 12.8H76.8a12.8 12.8 0 0 1 -12.8 -12.8V268.8a12.8 12.8 0 0 1 12.8 -12.8ZM204.8 256H243.2a12.8 12.8 0 0 1 12.8 12.8V307.2a12.8 12.8 0 0 1 -12.8 12.8H204.8a12.8 12.8 0 0 1 -12.8 -12.8V268.8a12.8 12.8 0 0 1 12.8 -12.8ZM76.8 384H115.2a12.8 12.8 0 0 1 12.8 12.8V435.2a12.8 12.8 0 0 1 -12.8 12.8H76.8a12.8 12.8 0 0 1 -12.8 -12.8V396.8a12.8 12.8 0 0 1 12.8 -12.8ZM204.8 384H243.2a12.8 12.8 0 0 1 12.8 12.8V435.2a12.8 12.8 0 0 1 -12.8 12.8H204.8a12.8 12.8 0 0 1 -12.8 -12.8V396.8a12.8 12.8 0 0 1 12.8 -12.8ZM332.8 256H371.2a12.8 12.8 0 0 1 12.8 12.8V435.2a12.8 12.8 0 0 1 -12.8 12.8H332.8a12.8 12.8 0 0 1 -12.8 -12.8V268.8a12.8 12.8 0 0 1 12.8 -12.8Z"/></svg></a></td><td class="r">R$ 25,00</td><td class="r">R$ 25,00</td><td class="r">R$ 25,00</td><td class="r">R$ 25,00</td><td class="r">R$ 25,00</td><td class="r">R$ 25,00</td><td class="r">R$ 25,00</td><td class="r">R$ 25,00</td><td class="r">R$ 25,00</td><td class="r">R$ 25,00</td><td class="r">R$ 25,00</td><td class="r">R$ 25,00</td></tr>
<tr><td class="l">12.01.04.122.0010.2072.3449040000000.1500.0001.000</td><td class="c">4826</td><td class="r">R$ 300,00</td><td class="c"><a class="act"><svg class="calc" viewBox="0 0 448 512"><path fill-rule="evenodd" d="M48 0H400a48 48 0 0 1 48 48V464a48 48 0 0 1 -48 48H48a48 48 0 0 1 -48 -48V48a48 48 0 0 1 48 -48ZM76.8 64H371.2a12.8 12.8 0 0 1 12.8 12.8V179.2a12.8 12.8 0 0 1 -12.8 12.8H76.8a12.8 12.8 0 0 1 -12.8 -12.8V76.8a12.8 12.8 0 0 1 12.8 -12.8ZM76.8 256H115.2a12.8 12.8 0 0 1 12.8 12.8V307.2a12.8 12.8 0 0 1 -12.8 12.8H76.8a12.8 12.8 0 0 1 -12.8 -12.8V268.8a12.8 12.8 0 0 1 12.8 -12.8ZM204.8 256H243.2a12.8 12.8 0 0 1 12.8 12.8V307.2a12.8 12.8 0 0 1 -12.8 12.8H204.8a12.8 12.8 0 0 1 -12.8 -12.8V268.8a12.8 12.8 0 0 1 12.8 -12.8ZM76.8 384H115.2a12.8 12.8 0 0 1 12.8 12.8V435.2a12.8 12.8 0 0 1 -12.8 12.8H76.8a12.8 12.8 0 0 1 -12.8 -12.8V396.8a12.8 12.8 0 0 1 12.8 -12.8ZM204.8 384H243.2a12.8 12.8 0 0 1 12.8 12.8V435.2a12.8 12.8 0 0 1 -12.8 12.8H204.8a12.8 12.8 0 0 1 -12.8 -12.8V396.8a12.8 12.8 0 0 1 12.8 -12.8ZM332.8 256H371.2a12.8 12.8 0 0 1 12.8 12.8V435.2a12.8 12.8 0 0 1 -12.8 12.8H332.8a12.8 12.8 0 0 1 -12.8 -12.8V268.8a12.8 12.8 0 0 1 12.8 -12.8Z"/></svg></a></td><td class="r">R$ 25,00</td><td class="r">R$ 25,00</td><td class="r">R$ 25,00</td><td class="r">R$ 25,00</td><td class="r">R$ 25,00</td><td class="r">R$ 25,00</td><td class="r">R$ 25,00</td><td class="r">R$ 25,00</td><td class="r">R$ 25,00</td><td class="r">R$ 25,00</td><td class="r">R$ 25,00</td><td class="r">R$ 25,00</td></tr>
<tr><td class="l">12.01.04.122.0010.2072.3339014000000.1500.0001.000</td><td class="c">4827</td><td class="r">R$ 3.000,00</td><td class="c"><a class="act"><svg class="calc" viewBox="0 0 448 512"><path fill-rule="evenodd" d="M48 0H400a48 48 0 0 1 48 48V464a48 48 0 0 1 -48 48H48a48 48 0 0 1 -48 -48V48a48 48 0 0 1 48 -48ZM76.8 64H371.2a12.8 12.8 0 0 1 12.8 12.8V179.2a12.8 12.8 0 0 1 -12.8 12.8H76.8a12.8 12.8 0 0 1 -12.8 -12.8V76.8a12.8 12.8 0 0 1 12.8 -12.8ZM76.8 256H115.2a12.8 12.8 0 0 1 12.8 12.8V307.2a12.8 12.8 0 0 1 -12.8 12.8H76.8a12.8 12.8 0 0 1 -12.8 -12.8V268.8a12.8 12.8 0 0 1 12.8 -12.8ZM204.8 256H243.2a12.8 12.8 0 0 1 12.8 12.8V307.2a12.8 12.8 0 0 1 -12.8 12.8H204.8a12.8 12.8 0 0 1 -12.8 -12.8V268.8a12.8 12.8 0 0 1 12.8 -12.8ZM76.8 384H115.2a12.8 12.8 0 0 1 12.8 12.8V435.2a12.8 12.8 0 0 1 -12.8 12.8H76.8a12.8 12.8 0 0 1 -12.8 -12.8V396.8a12.8 12.8 0 0 1 12.8 -12.8ZM204.8 384H243.2a12.8 12.8 0 0 1 12.8 12.8V435.2a12.8 12.8 0 0 1 -12.8 12.8H204.8a12.8 12.8 0 0 1 -12.8 -12.8V396.8a12.8 12.8 0 0 1 12.8 -12.8ZM332.8 256H371.2a12.8 12.8 0 0 1 12.8 12.8V435.2a12.8 12.8 0 0 1 -12.8 12.8H332.8a12.8 12.8 0 0 1 -12.8 -12.8V268.8a12.8 12.8 0 0 1 12.8 -12.8Z"/></svg></a></td><td class="r">R$ 250,00</td><td class="r">R$ 250,00</td><td class="r">R$ 250,00</td><td class="r">R$ 250,00</td><td class="r">R$ 250,00</td><td class="r">R$ 250,00</td><td class="r">R$ 250,00</td><td class="r">R$ 250,00</td><td class="r">R$ 250,00</td><td class="r">R$ 250,00</td><td class="r">R$ 250,00</td><td class="r">R$ 250,00</td></tr>
</tbody></table>
</div>
<div class="btn" id="btnbottom"><svg class="calc" viewBox="0 0 448 512"><path fill-rule="evenodd" d="M48 0H400a48 48 0 0 1 48 48V464a48 48 0 0 1 -48 48H48a48 48 0 0 1 -48 -48V48a48 48 0 0 1 48 -48ZM76.8 64H371.2a12.8 12.8 0 0 1 12.8 12.8V179.2a12.8 12.8 0 0 1 -12.8 12.8H76.8a12.8 12.8 0 0 1 -12.8 -12.8V76.8a12.8 12.8 0 0 1 12.8 -12.8ZM76.8 256H115.2a12.8 12.8 0 0 1 12.8 12.8V307.2a12.8 12.8 0 0 1 -12.8 12.8H76.8a12.8 12.8 0 0 1 -12.8 -12.8V268.8a12.8 12.8 0 0 1 12.8 -12.8ZM204.8 256H243.2a12.8 12.8 0 0 1 12.8 12.8V307.2a12.8 12.8 0 0 1 -12.8 12.8H204.8a12.8 12.8 0 0 1 -12.8 -12.8V268.8a12.8 12.8 0 0 1 12.8 -12.8ZM76.8 384H115.2a12.8 12.8 0 0 1 12.8 12.8V435.2a12.8 12.8 0 0 1 -12.8 12.8H76.8a12.8 12.8 0 0 1 -12.8 -12.8V396.8a12.8 12.8 0 0 1 12.8 -12.8ZM204.8 384H243.2a12.8 12.8 0 0 1 12.8 12.8V435.2a12.8 12.8 0 0 1 -12.8 12.8H204.8a12.8 12.8 0 0 1 -12.8 -12.8V396.8a12.8 12.8 0 0 1 12.8 -12.8ZM332.8 256H371.2a12.8 12.8 0 0 1 12.8 12.8V435.2a12.8 12.8 0 0 1 -12.8 12.8H332.8a12.8 12.8 0 0 1 -12.8 -12.8V268.8a12.8 12.8 0 0 1 12.8 -12.8Z"/></svg> Recalcular Geral</div>
</body></html>
